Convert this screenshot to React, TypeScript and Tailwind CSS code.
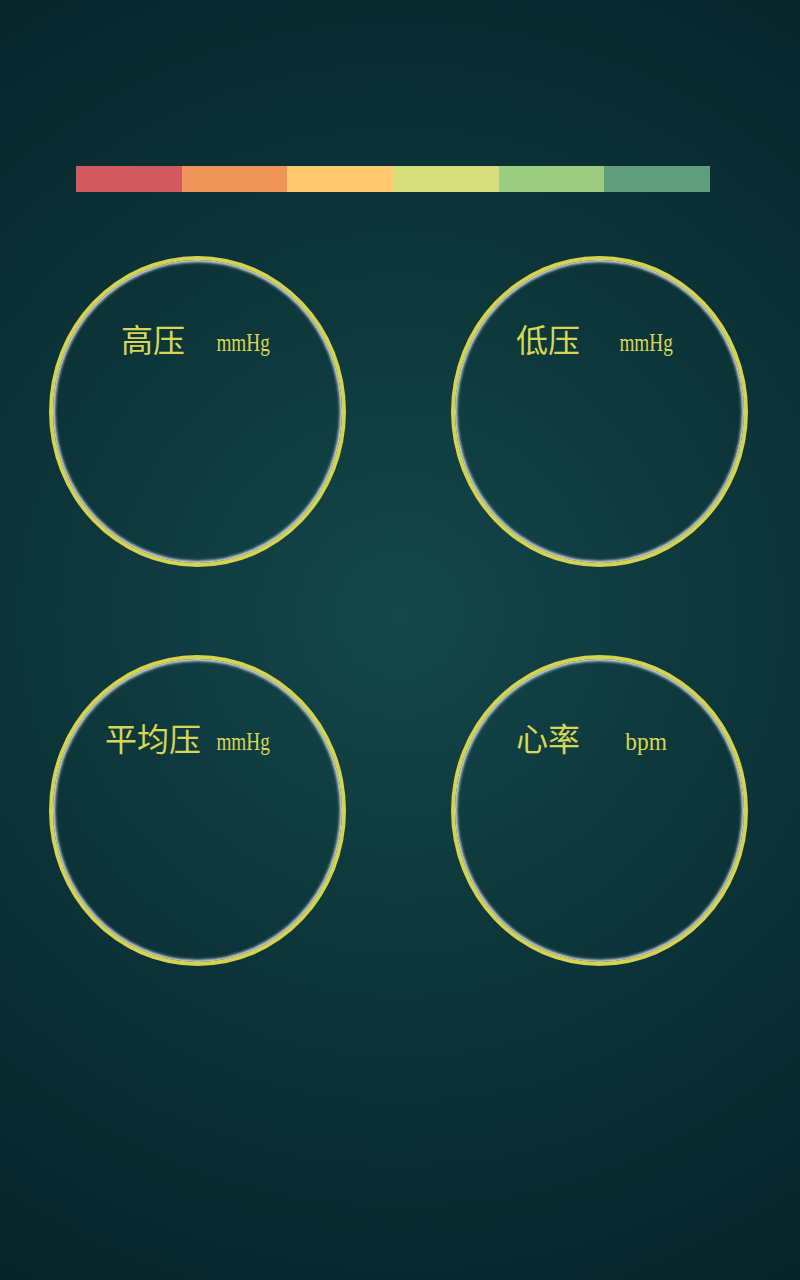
import React from "react";

const segments = ["#d2595d", "#f0955a", "#ffc76e", "#d5de7b", "#9bcc82", "#5f9d7c"];

interface GaugeProps {
  label: string;
  unit: string;
  padLeft: string;
  unitW: string;
  wide?: boolean;
}

const Gauge: React.FC<GaugeProps> = ({ label, unit, padLeft, unitW, wide }) => {
  return (
    <div className="w-[297px] h-[311px] rounded-[50%] border-4 border-[#d6d44f] shadow-[inset_0_0_3px_2px_rgba(230,236,244,0.95)] flex flex-col">
      <div className={`flex items-end pt-[58px] ${padLeft}`}>
        <span
          className="w-[120px] text-center text-[32px] leading-[40px] text-[#d8d655]"
          style={{ fontFamily: '"Noto Sans CJK SC", sans-serif' }}
        >
          {label}
        </span>
        <span className={`${unitW} flex justify-center`}>
          <span
            className={`inline-block text-[26px] leading-[30px] text-[#d8d655] ${wide ? "scale-x-[0.9]" : "scale-x-[0.74]"}`}
            style={{ fontFamily: '"Liberation Serif", serif' }}
          >
            {unit}
          </span>
        </span>
      </div>
    </div>
  );
};

export default function App() {
  return (
    <div className="w-[800px] h-[1280px] bg-[radial-gradient(circle_at_50%_48%,#14474b_0%,#0d383c_40%,#05232a_100%)] flex flex-col">
      <div className="flex mt-[166px] ml-[76px] w-[634px] h-[26px]">
        {segments.map((c) => (
          <div key={c} className="flex-1" style={{ backgroundColor: c }} />
        ))}
      </div>

      <div className="grid grid-cols-[297px_297px] justify-between px-[49px] pr-[52px] mt-[64px] gap-y-[88px]">
        <Gauge label="高压" unit="mmHg" padLeft="pl-[40px]" unitW="w-[60px]" />
        <Gauge label="低压" unit="mmHg" padLeft="pl-[33px]" unitW="w-[76px]" />
        <Gauge label="平均压" unit="mmHg" padLeft="pl-[40px]" unitW="w-[60px]" />
        <Gauge label="心率" unit="bpm" padLeft="pl-[33px]" unitW="w-[76px]" wide />
      </div>
    </div>
  );
}
